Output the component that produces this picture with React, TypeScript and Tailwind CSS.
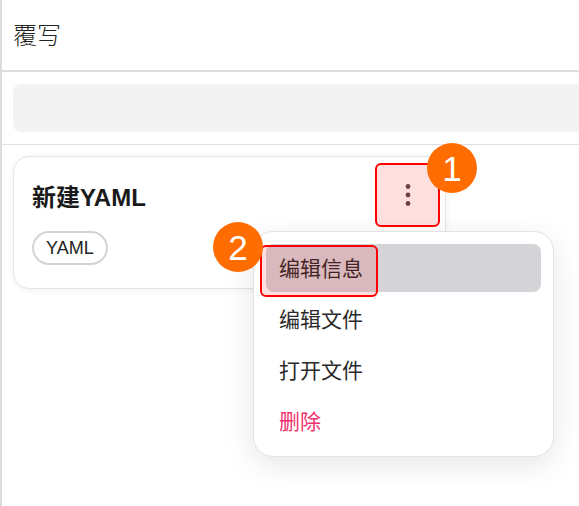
import React from 'react';

const font = { fontFamily: '"Noto Sans CJK SC", "Noto Sans", sans-serif' };

const Step = ({ n, className }: { n: string; className: string }) => (
  <div
    className={`absolute w-[50px] h-[50px] rounded-full bg-[#ff6d00] text-white flex items-center justify-center text-[35px] leading-none font-['Liberation_Sans',sans-serif] ${className}`}
  >
    {n}
  </div>
);

const App = () => {
  const items = ['编辑信息', '编辑文件', '打开文件'];
  return (
    <div
      className="relative w-[579px] h-[506px] overflow-hidden bg-white border-l-2 border-[#dcdcdc] text-[#222]"
      style={font}
    >
      {/* Header */}
      <div className="h-[72px] flex items-center pl-[11px] pb-[2px] border-b-2 border-[#dedede]">
        <span className="text-[24px] font-light text-[#222]">覆写</span>
      </div>

      {/* Search */}
      <div className="pl-[11px] py-[12px] border-b border-[#e0e0e0]">
        <div className="h-[48px] rounded-l-[8px] bg-[#f3f3f3]"></div>
      </div>

      {/* Card list */}
      <div className="pl-[11px] pt-[11px]">
        <div className="w-[433px] h-[133px] rounded-[16px] border border-[#e6e6e6] bg-white shadow-[0_1px_6px_rgba(0,0,0,0.06)] flex justify-between pl-[18px] pr-[5px] pt-[6px]">
          <div className="pt-[19px]">
            <div className="text-[24px] font-bold leading-[32px] text-[#1a1a1a] font-['Liberation_Sans','Noto_Sans_CJK_SC',sans-serif]">
              新建YAML
            </div>
            <div className="mt-[17px] inline-flex items-center h-[34px] px-[12px] rounded-full border-2 border-[#d4d4d8] text-[18px] text-[#222] font-['Liberation_Sans',sans-serif]">
              YAML
            </div>
          </div>
          <button className="w-[64px] h-[64px] flex items-center justify-center">
            <svg width="10" height="28" viewBox="0 0 10 28">
              <circle cx="5" cy="5.5" r="2.4" fill="#5a4b4d" />
              <circle cx="5" cy="14" r="2.4" fill="#5a4b4d" />
              <circle cx="5" cy="22.5" r="2.4" fill="#5a4b4d" />
            </svg>
          </button>
        </div>
      </div>

      {/* Dropdown menu */}
      <div className="absolute left-[251px] top-[231px] w-[301px] h-[226px] rounded-[20px] border border-[#e3e3e3] bg-white shadow-[0_8px_30px_rgba(0,0,0,0.10)] p-[12px] flex flex-col gap-[3px]">
        {items.map((t, i) => (
          <div
            key={t}
            className={`h-[48px] shrink-0 flex items-center px-[13px] rounded-[8px] text-[21px] text-[#2a2a2a] ${i === 0 ? 'bg-[#d4d3d8]' : ''}`}
          >
            {t}
          </div>
        ))}
        <div className="h-[48px] shrink-0 flex items-center px-[13px] text-[21px] text-[#f0306e]">删除</div>
      </div>

      {/* Annotations */}
      <div className="absolute left-[373px] top-[163px] w-[65px] h-[64px] rounded-[6px] border-2 border-[#ff0000] bg-[rgba(255,0,0,0.12)]"></div>
      <Step n="1" className="left-[425px] top-[143px]" />
      <div className="absolute left-[258px] top-[245px] w-[118px] h-[52px] rounded-[6px] border-2 border-[#ff0000] bg-[rgba(255,0,0,0.12)]"></div>
      <Step n="2" className="left-[211px] top-[222px]" />
    </div>
  );
};

export default App;
